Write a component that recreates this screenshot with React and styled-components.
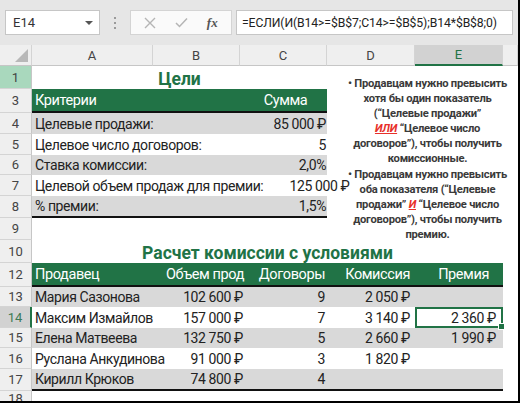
import React from "react";
import styled, { createGlobalStyle } from "styled-components";

const GREEN = "#217346";
const BAND = "#d9d9d9";

const Global = createGlobalStyle`
  html, body { margin: 0; padding: 0; background: #fff; }
  body { font-family: Roboto, "Liberation Sans", Arial, sans-serif; }
  * { box-sizing: border-box; }
`;

const Frame = styled.div`
  width: 520px;
  height: 403px;
  overflow: hidden;
  display: flex;
  flex-direction: column;
  border-right: 2px solid #000;
  border-bottom: 2px solid #000;
  background: #fff;
`;

const FormulaBar = styled.div`
  height: 45px;
  flex: none;
  background: #e6e6e6;
  display: flex;
  align-items: center;
  padding: 0 5px 0 5px;
`;

const NameBox = styled.div`
  width: 95px;
  height: 25px;
  background: #fff;
  border: 1px solid #c6c6c6;
  display: flex;
  align-items: center;
  justify-content: space-between;
  padding: 0 6px 0 7px;
  font-size: 13px;
  color: #333;
`;

const Caret = styled.span`
  width: 0;
  height: 0;
  border-left: 4px solid transparent;
  border-right: 4px solid transparent;
  border-top: 4px solid #555;
`;

const Dots = styled.div`
  width: 30px;
  display: flex;
  flex-direction: column;
  align-items: center;
  gap: 3px;
  span {
    width: 2px;
    height: 2px;
    background: #9a9a9a;
  }
`;

const ButtonBox = styled.div`
  width: 102px;
  height: 25px;
  background: #fafafa;
  border: 1px solid #d4d4d4;
  display: flex;
  align-items: center;
  justify-content: space-around;
  padding: 0 4px;
`;

const Fx = styled.span`
  font-family: "Liberation Serif", "Times New Roman", serif;
  font-style: italic;
  font-weight: bold;
  font-size: 13px;
  color: #555;
`;

const FormulaInput = styled.div`
  flex: 1;
  margin-left: 4px;
  height: 25px;
  background: #fff;
  border: 1px solid #c6c6c6;
  display: flex;
  align-items: center;
  padding-left: 5px;
  font-size: 12.2px;
  letter-spacing: -0.1px;
  color: #222;
  white-space: nowrap;
  overflow: hidden;
`;

const Sheet = styled.div`
  flex: 1;
  display: grid;
  grid-template-columns: 32px 121px 87px 87px 88px 88px 1fr;
  grid-template-rows: 21px 23px 24px 21px 21px 20px 21px 22px 22px 23px 24px 20px 21px 20px 21px 22px 1fr;
  font-size: 14px;
  color: #222;
`;

const Corner = styled.div`
  grid-row: 1;
  grid-column: 1;
  background: #efefef;
  border-right: 1px solid #d4d4d4;
  border-bottom: 1px solid #c6c6c6;
  position: relative;
  &::after {
    content: "";
    position: absolute;
    right: 3px;
    bottom: 3px;
    border-left: 13px solid transparent;
    border-bottom: 13px solid #b8b8b8;
  }
`;

const ColHead = styled.div`
  grid-row: 1;
  background: ${(p) => (p.$active ? "#d2d2d2" : "#efefef")};
  border-right: 1px solid #d4d4d4;
  border-bottom: ${(p) => (p.$active ? `2px solid ${GREEN}` : "1px solid #c6c6c6")};
  color: ${(p) => (p.$active ? GREEN : "#444")};
  font-size: 13px;
  display: flex;
  align-items: center;
  justify-content: center;
`;

const RowHead = styled.div`
  grid-column: 1;
  grid-row: ${(p) => p.$row};
  background: ${(p) => (p.$tone === "green" ? "#a9d8bd" : p.$tone === "active" ? "#d2d2d2" : "#efefef")};
  border-right: ${(p) => (p.$tone === "active" ? `2px solid ${GREEN}` : "1px solid #c6c6c6")};
  border-bottom: 1px solid #d4d4d4;
  color: ${(p) => (p.$tone === "active" ? "#3d7a55" : "#444")};
  font-size: 13px;
  display: flex;
  align-items: center;
  justify-content: center;
`;

const Title = styled.div`
  grid-row: ${(p) => p.$row};
  grid-column: ${(p) => p.$cols};
  color: ${GREEN};
  font-weight: bold;
  font-size: 17.5px;
  display: flex;
  align-items: center;
  justify-content: center;
  padding-top: 2px;
`;

const TableRow = styled.div`
  grid-row: ${(p) => p.$row};
  grid-column: ${(p) => p.$cols};
  display: grid;
  grid-template-columns: ${(p) => p.$tracks};
  align-items: center;
  background: ${(p) => (p.$tone === "head" ? GREEN : p.$tone === "gray" ? BAND : "#fff")};
  color: ${(p) => (p.$tone === "head" ? "#fff" : "#222")};
  border-bottom: ${(p) => (p.$rule ? "2px solid #111" : "none")};
  font-size: ${(p) => (p.$tone === "head" ? "14.5px" : "14px")};
  letter-spacing: -0.4px;
  white-space: nowrap;
`;

const Cell = styled.div`
  height: 100%;
  display: flex;
  align-items: center;
  justify-content: ${(p) => (p.$align === "right" ? "flex-end" : p.$align === "center" ? "center" : "flex-start")};
  padding: 0 ${(p) => p.$pr || 0}px 0 ${(p) => p.$pl || 0}px;
  position: relative;
  ${(p) =>
    p.$selected &&
    `
    background: #fff;
    border: 2px solid ${GREEN};
    &::after {
      content: "";
      position: absolute;
      right: -4px;
      bottom: -4px;
      width: 5px;
      height: 5px;
      background: ${GREEN};
      border: 1px solid #fff;
    }
  `}
`;

const Notes = styled.div`
  grid-row: 2 / 10;
  grid-column: 5 / 8;
  padding: 10px 0 0 10px;
  font-size: 11.2px;
  font-weight: bold;
  letter-spacing: -0.25px;
  line-height: 15px;
  color: #3a3a3a;
  text-align: center;
  white-space: nowrap;
  p {
    margin: 0 0 1px;
  }
`;

const Key = styled.span`
  color: #e8302a;
  font-style: italic;
  text-decoration: underline;
  text-decoration-color: #e8302a;
`;

const goals = [
  ["Целевые продажи:", "85 000 ₽"],
  ["Целевое число договоров:", "5"],
  ["Ставка комиссии:", "2,0%"],
  ["Целевой объем продаж для премии:", "125 000 ₽"],
  ["% премии:", "1,5%"],
];

const sales = [
  ["Мария Сазонова", "102 600 ₽", "9", "2 050 ₽", ""],
  ["Максим Измайлов", "157 000 ₽", "7", "3 140 ₽", "2 360 ₽"],
  ["Елена Матвеева", "132 750 ₽", "5", "2 660 ₽", "1 990 ₽"],
  ["Руслана Анкудинова", "91 000 ₽", "3", "1 820 ₽", ""],
  ["Кирилл Крюков", "74 800 ₽", "4", "", ""],
];

const rowLabels = ["1", "3", "4", "5", "6", "7", "8", "9", "10", "12", "13", "14", "15", "16", "17", "18"];

const salesTracks = "118px 97px 80px 88px 88px";

export default function App() {
  return (
    <>
      <Global />
      <Frame>
        <FormulaBar>
          <NameBox>
            E14
            <Caret />
          </NameBox>
          <Dots>
            <span />
            <span />
            <span />
          </Dots>
          <ButtonBox>
            <svg width="12" height="12" viewBox="0 0 12 12">
              <path d="M1 1 L11 11 M11 1 L1 11" stroke="#b5b5b5" strokeWidth="1.4" />
            </svg>
            <svg width="13" height="11" viewBox="0 0 13 11">
              <path d="M1 6 L4.5 9.5 L12 1.5" stroke="#b5b5b5" strokeWidth="1.5" fill="none" />
            </svg>
            <Fx>fx</Fx>
          </ButtonBox>
          <FormulaInput>=ЕСЛИ(И(B14&gt;=$B$7;C14&gt;=$B$5);B14*$B$8;0)</FormulaInput>
        </FormulaBar>

        <Sheet>
          <Corner />
          {["A", "B", "C", "D", "E", ""].map((c) => (
            <ColHead key={c || "x"} $active={c === "E"}>
              {c}
            </ColHead>
          ))}

          {rowLabels.map((r, i) => (
            <RowHead key={r} $row={i + 2} $tone={r === "1" ? "green" : r === "14" ? "active" : ""}>
              {r}
            </RowHead>
          ))}

          <Title $row={2} $cols="2 / 5">Цели</Title>

          <TableRow $row={3} $cols="2 / 5" $tracks="1fr 87px" $tone="head" $rule>
            <Cell $pl={3}>Критерии</Cell>
            <Cell $align="center" $pl={4}>Сумма</Cell>
          </TableRow>
          {goals.map(([label, value], i) => (
            <TableRow
              key={label}
              $row={i + 4}
              $cols="2 / 5"
              $tracks="1fr 87px"
              $tone={i % 2 === 0 ? "gray" : "white"}
              $rule={i === goals.length - 1}
            >
              <Cell $pl={3}>{label}</Cell>
              <Cell $align="right" $pr={1}>{value}</Cell>
            </TableRow>
          ))}

          <Notes>
            <p>
              • Продавцам нужно превысить
              <br />
              хотя бы один показатель
              <br />
              (“Целевые продажи”
              <br />
              <Key>ИЛИ</Key> “Целевое число
              <br />
              договоров”), чтобы получить
              <br />
              комиссионные.
            </p>
            <p>
              • Продавцам нужно превысить
              <br />
              оба показателя (“Целевые
              <br />
              продажи” <Key>И</Key> “Целевое число
              <br />
              договоров”), чтобы получить
              <br />
              премию.
            </p>
          </Notes>

          <Title $row={10} $cols="2 / 7">Расчет комиссии с условиями</Title>

          <TableRow $row={11} $cols="2 / 7" $tracks={salesTracks} $tone="head" $rule>
            <Cell $pl={3}>Продавец</Cell>
            <Cell $align="right" $pr={3}>Объем прод</Cell>
            <Cell $align="right" $pr={2}>Договоры</Cell>
            <Cell $align="right" $pr={5}>Комиссия</Cell>
            <Cell $align="right" $pr={14}>Премия</Cell>
          </TableRow>
          {sales.map((r, i) => (
            <TableRow
              key={r[0]}
              $row={i + 12}
              $cols="2 / 7"
              $tracks={salesTracks}
              $tone={i % 2 === 0 ? "gray" : "white"}
              $rule={i === sales.length - 1}
            >
              <Cell $pl={3}>{r[0]}</Cell>
              <Cell $align="right" $pr={4}>{r[1]}</Cell>
              <Cell $align="right" $pr={2}>{r[2]}</Cell>
              <Cell $align="right" $pr={5}>{r[3]}</Cell>
              <Cell $align="right" $pr={i === 1 ? 5 : 7} $selected={i === 1}>
                {r[4]}
              </Cell>
            </TableRow>
          ))}
        </Sheet>
      </Frame>
    </>
  );
}
